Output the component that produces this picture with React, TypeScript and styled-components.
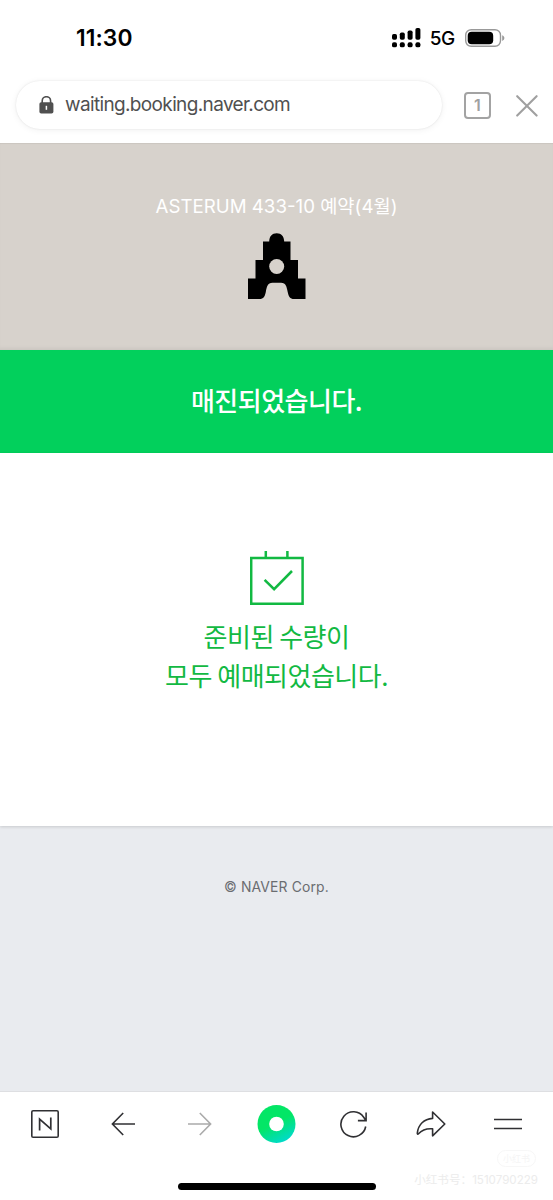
import React from 'react';
import styled, { createGlobalStyle } from 'styled-components';

const GlobalStyle = createGlobalStyle`
  * { box-sizing: border-box; }
  body {
    margin: 0;
    background: #fff;
    font-family: Inter, 'Noto Sans CJK KR', sans-serif;
  }
  svg { display: block; flex: none; }
`;

const Screen = styled.div`
  position: relative;
  width: 553px;
  height: 1200px;
  display: flex;
  flex-direction: column;
  overflow: hidden;
  background: #fff;
`;

const StatusBar = styled.header`
  height: 76px;
  flex: none;
  display: flex;
  align-items: center;
  padding: 0 48px 0 76px;
`;

const Clock = styled.time`
  font-size: 22.8px;
  font-weight: 600;
  line-height: 28px;
  letter-spacing: 0.1px;
  color: #000;
  margin-right: auto;
`;

const Network = styled.span`
  font-size: 19px;
  font-weight: 450;
  line-height: 24px;
  letter-spacing: -0.3px;
  margin: 1px 10px 0 9px;
`;

const AddressBar = styled.div`
  height: 67px;
  flex: none;
  display: flex;
  align-items: flex-start;
  padding: 5px 14px 0 16px;
`;

const AddressField = styled.div`
  width: 426px;
  height: 48px;
  display: flex;
  align-items: center;
  padding-left: 23px;
  border-radius: 24px;
  background: #fff;
  box-shadow: 0 0 2px rgba(0, 0, 0, 0.1), 0 1px 7px rgba(0, 0, 0, 0.06);
`;

const Url = styled.span`
  margin: -1px 0 0 11px;
  font-size: 19px;
  line-height: 28px;
  letter-spacing: -0.64px;
  color: #505050;
`;

const TabCount = styled.div`
  width: 27px;
  height: 27px;
  margin: 11px 25px 0 22px;
  border: 2px solid #a3a3a3;
  border-radius: 4px;
  color: #a0a0a0;
  font-size: 16px;
  font-weight: 600;
  line-height: 23px;
  text-align: center;
`;

const CloseIcon = styled.svg`
  margin: 14px -1px 0 0;
`;

const Hero = styled.section`
  height: 207px;
  flex: none;
  display: flex;
  flex-direction: column;
  align-items: center;
  padding-top: 50px;
  background: #d7d2cc;
  box-shadow: inset 0 2px 1px -1px rgba(0, 0, 0, 0.06), inset 0 -4px 4px -3px rgba(0, 0, 0, 0.08);
`;

const HeroTitle = styled.h1`
  margin: 0 0 12px;
  height: 28px;
  font-size: 18.7px;
  font-weight: 400;
  line-height: 28px;
  letter-spacing: 0;
  color: #fff;
  white-space: nowrap;
`;

const Banner = styled.section`
  height: 103px;
  flex: none;
  display: flex;
  align-items: center;
  justify-content: center;
  padding-bottom: 4px;
  background: #02d05c;
`;

const BannerText = styled.h2`
  margin: 0;
  font-family: 'Noto Sans CJK KR', sans-serif;
  font-size: 26px;
  font-weight: 500;
  line-height: 38px;
  letter-spacing: -0.5px;
  color: #fff;
`;

const Content = styled.main`
  position: relative;
  height: 373px;
  flex: none;
  display: flex;
  flex-direction: column;
  align-items: center;
  padding-top: 98px;
  background: #fff;
  box-shadow: 0 1px 3px rgba(0, 0, 0, 0.14);
`;

const Message = styled.p`
  margin: 11px 0 0;
  font-family: 'Noto Sans CJK KR', sans-serif;
  font-size: 26px;
  font-weight: 400;
  line-height: 39px;
  letter-spacing: -0.5px;
  text-align: center;
  color: #12b942;
`;

const Footer = styled.footer`
  flex: 1;
  padding-top: 51px;
  background: #e9ebef;
  font-size: 13.9px;
  line-height: 20px;
  letter-spacing: 0.15px;
  text-align: center;
  color: #6b6d71;
`;

const BottomBar = styled.nav`
  height: 109px;
  flex: none;
  display: flex;
  flex-direction: column;
  align-items: center;
  justify-content: space-between;
  padding-bottom: 10px;
  border-top: 1px solid #dedfe2;
  background: #fff;
`;

const Actions = styled.div`
  width: 100%;
  height: 64px;
  display: flex;
  align-items: center;
  justify-content: space-between;
  padding: 0 25px;
`;

const Action = styled.button<{ $muted?: boolean }>`
  width: 40px;
  height: 40px;
  padding: 0;
  border: 0;
  display: flex;
  align-items: center;
  justify-content: center;
  background: none;
  color: ${(p) => (p.$muted ? '#aaa' : '#303033')};
`;

const HomeIndicator = styled.div`
  width: 198px;
  height: 7px;
  border-radius: 4px;
  background: #000;
`;

const Watermark = styled.div`
  position: absolute;
  right: 15px;
  bottom: 11px;
  display: flex;
  flex-direction: column;
  align-items: flex-end;
  gap: 5px;
  font-family: Inter, 'Noto Sans CJK SC', sans-serif;
  font-size: 11.6px;
  line-height: 17px;
  letter-spacing: 0;
  color: #ececec;
  white-space: nowrap;
`;

const WatermarkBadge = styled.span`
  width: 39px;
  height: 17px;
  margin-right: 2px;
  border: 1px solid #f7f7f7;
  border-radius: 9px;
  font-size: 9px;
  line-height: 15px;
  text-align: center;
  color: #f5f5f5;
`;

const signalColumns = [
  { x: 0, y: 6 },
  { x: 7.8, y: 4.6 },
  { x: 15.6, y: 2.6 },
  { x: 23.4, y: 0 },
];

const SignalIcon = () => (
  <svg width="29" height="20" viewBox="0 0 29 20">
    {signalColumns.map(({ x, y }) => (
      <g key={x}>
        <rect x={x} y={y} width="5" height={11.8 - y} rx="1.7" />
        <rect x={x} y="14.3" width="5" height="5" rx="1.9" />
      </g>
    ))}
  </svg>
);

const BatteryIcon = () => (
  <svg width="40" height="18" viewBox="0 0 40 18" fill="none">
    <rect x="0.7" y="0.7" width="34.8" height="16.6" rx="5.5" stroke="#999" strokeWidth="1.4" />
    <rect x="2.7" y="2.7" width="25.5" height="12.6" rx="4" fill="#000" />
    <path d="M37.2 6.3c2.9 1 2.9 4.5 0 5.6Z" fill="#999" />
  </svg>
);

const LockIcon = () => (
  <svg width="15" height="18" viewBox="0 0 15 18">
    <path d="M3.2 8V4.9a4.2 4.2 0 0 1 8.4 0V8" fill="none" stroke="#505050" strokeWidth="1.6" />
    <rect x="0.4" y="6.2" width="14" height="11.4" rx="1.8" fill="#505050" />
    <path d="M7.4 9.8v4" stroke="#fff" strokeWidth="1.5" />
  </svg>
);

const BrandMark = () => (
  <svg width="58" height="66" viewBox="0 0 58 66">
    <path d="M0 66V45.5H7.5V27H15V8.5H21.2C21.4 3.2 24 .2 28.7.2S36 3.2 36.2 8.5H42.5V27H50V45.5H57.5V66H46C42 66 40.6 63.5 39.7 59C38.7 54 38 49.8 33 49.8H24.5C19.5 49.8 18.8 54 17.8 59C16.9 63.5 15.5 66 11.5 66Z" />
    <circle cx="28.7" cy="33.5" r="7.5" fill="#d7d2cc" />
  </svg>
);

const CalendarCheckIcon = () => (
  <svg width="54" height="54" viewBox="0 0 54 54" fill="none" stroke="#12b942" strokeWidth="2.5">
    <path d="M1.2 6.9h51.4v45.8H1.2ZM15.8 0v6.4M37.4 0v6.4" />
    <path d="M14.6 28.8l9.5 9.4L42 20" />
  </svg>
);

export default function App() {
  return (
    <Screen>
      <GlobalStyle />
      <StatusBar>
        <Clock>11:30</Clock>
        <SignalIcon />
        <Network>5G</Network>
        <BatteryIcon />
      </StatusBar>
      <AddressBar>
        <AddressField>
          <LockIcon />
          <Url>waiting.booking.naver.com</Url>
        </AddressField>
        <TabCount>1</TabCount>
        <CloseIcon width="22" height="22" viewBox="0 0 22 22" stroke="#a0a0a0" strokeWidth="2.1" strokeLinecap="round">
          <path d="M1.2 1.2l19.4 19.4M20.6 1.2L1.2 20.6" />
        </CloseIcon>
      </AddressBar>
      <Hero>
        <HeroTitle>ASTERUM 433-10 예약(4월)</HeroTitle>
        <BrandMark />
      </Hero>
      <Banner>
        <BannerText>매진되었습니다.</BannerText>
      </Banner>
      <Content>
        <CalendarCheckIcon />
        <Message>
          준비된 수량이
          <br />
          모두 예매되었습니다.
        </Message>
      </Content>
      <Footer>© NAVER Corp.</Footer>
      <BottomBar>
        <Actions>
          <Action aria-label="Naver">
            <svg width="28" height="28" viewBox="0 0 28 28" fill="none" stroke="currentColor">
              <rect x="0.8" y="0.8" width="26.4" height="26.4" rx="1.3" strokeWidth="1.6" />
              <path d="M8.6 20.4V9.2L19.8 19V7.6" strokeWidth="1.7" />
            </svg>
          </Action>
          <Action aria-label="Back">
            <svg width="26" height="24" viewBox="-2 0 26 24" fill="none" stroke="currentColor" strokeWidth="1.6">
              <path d="M12.2 1L1.4 12l10.8 11M1.4 12H24" />
            </svg>
          </Action>
          <Action $muted aria-label="Forward">
            <svg width="26" height="24" viewBox="-2 0 26 24" fill="none" stroke="currentColor" strokeWidth="1.6">
              <path d="M11.8 1L22.6 12 11.8 23M22.6 12H0" />
            </svg>
          </Action>
          <Action aria-label="Green dot">
            <svg width="40" height="38" viewBox="-1.5 0 40 38">
              <defs>
                <linearGradient id="dot" x1="0.3" y1="0.1" x2="0.75" y2="1">
                  <stop offset="0.4" stopColor="#03e666" />
                  <stop offset="1" stopColor="#00d9d5" />
                </linearGradient>
              </defs>
              <circle cx="19" cy="19" r="19" fill="url(#dot)" />
              <circle cx="19" cy="19" r="7.3" fill="#fff" />
            </svg>
          </Action>
          <Action aria-label="Reload">
            <svg width="28" height="28" viewBox="0.7 0 28 28" fill="none" stroke="currentColor" strokeWidth="1.6">
              <path d="M26.4 16.5A12.5 12.5 0 1 1 24.4 7.2L26.6 10.5M26.8 2.6V10.6H18.6" />
            </svg>
          </Action>
          <Action aria-label="Share">
            <svg width="30" height="26" viewBox="0 0 30 26" fill="none" stroke="currentColor" strokeWidth="1.6" strokeLinejoin="round">
              <path d="M16.6 1L28.8 13 16.6 24.8V17.8C10 17.2 6.5 18.4 2.5 22.8C1.8 23.5 1.2 23 1.3 22.2C2.2 13.5 8 8 16.6 7.4Z" />
            </svg>
          </Action>
          <Action aria-label="Menu">
            <svg width="28" height="12" viewBox="0 0 28 12" stroke="currentColor" strokeWidth="1.7">
              <path d="M0 1.5h28M0 10.5h28" />
            </svg>
          </Action>
        </Actions>
        <HomeIndicator />
      </BottomBar>
      <Watermark>
        <WatermarkBadge>小红书</WatermarkBadge>
        <span>小红书号：1510790229</span>
      </Watermark>
    </Screen>
  );
}
